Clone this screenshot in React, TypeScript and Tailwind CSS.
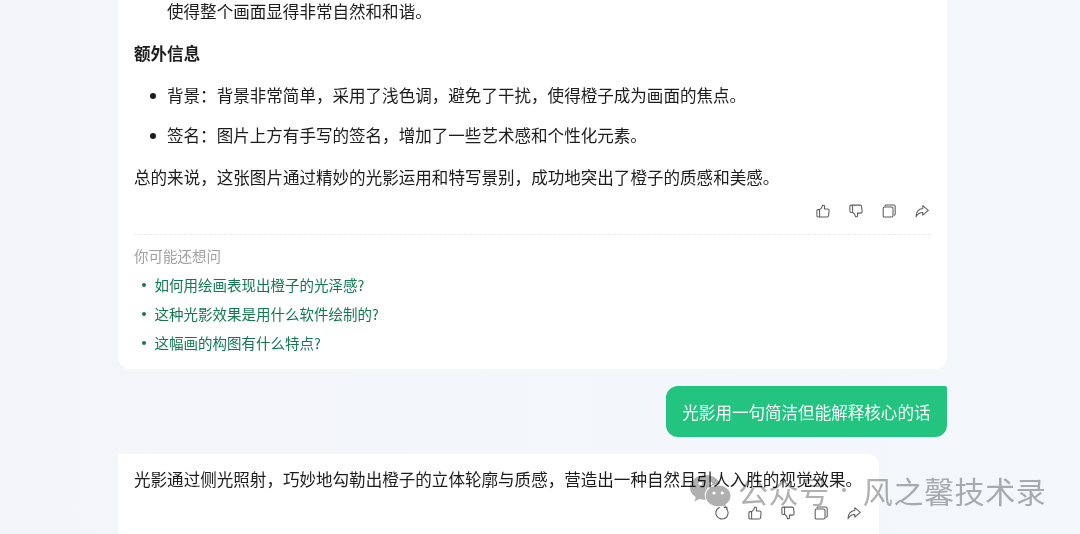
import type { ReactNode } from "react";
import clsx from "clsx";

const details = [
  "背景：背景非常简单，采用了浅色调，避免了干扰，使得橙子成为画面的焦点。",
  "签名：图片上方有手写的签名，增加了一些艺术感和个性化元素。",
];

const suggestions = [
  "如何用绘画表现出橙子的光泽感?",
  "这种光影效果是用什么软件绘制的?",
  "这幅画的构图有什么特点?",
];

function Icon({ children, className }: { children: ReactNode; className?: string }) {
  return (
    <svg
      viewBox="0 0 14 14"
      fill="none"
      stroke="currentColor"
      strokeWidth="1.05"
      strokeLinecap="round"
      strokeLinejoin="round"
      className={clsx("size-3.5", className)}
    >
      {children}
    </svg>
  );
}

const THUMB = "M3.6 5.6 5.5 4.1 6.6 1.3Q8.8.8 8.6 3L8.4 4.9H11.6Q13.1 4.9 13.1 6.3L12.6 11.6Q12.4 12.9 11.1 12.9H2Q.9 12.9.9 11.8V6.7Q.9 5.6 2 5.6ZM3.6 5.6V12.9";

function ThumbUp() {
  return (
    <Icon>
      <path d={THUMB} />
    </Icon>
  );
}

function ThumbDown() {
  return (
    <Icon className="-scale-y-100">
      <path d={THUMB} />
    </Icon>
  );
}

function Copy() {
  return (
    <Icon>
      <rect x="1.2" y="3" width="9.8" height="10" rx="1.3" />
      <path d="M3 1.7Q3.3 1 4.200 1H11.500Q13.200 1 13.200 2.700V10Q13.200 10.900 12.300 11.300" />
    </Icon>
  );
}

function Share() {
  return (
    <Icon>
      <path d="M7.8 1.7 13.3 6.4 7.8 11.1V8.5Q3.5 8.4 1 12.7 1.2 5.3 7.8 4.5Z" />
    </Icon>
  );
}

function Refresh() {
  return (
    <Icon>
      <path d="M11.8 3.200A6.100 6.100 0 1 1 4.200 1.500" />
      <path d="M9.300 1.600 11.900 1.200 11.900 3.400" />
    </Icon>
  );
}

function Actions({ refresh }: { refresh?: boolean }) {
  return (
    <div className="flex justify-end gap-[19px] text-[#5c5c5c]">
      {refresh && <Refresh />}
      <ThumbUp />
      <ThumbDown />
      <Copy />
      <Share />
    </div>
  );
}

function Watermark() {
  return (
    <div className="absolute left-[690px] top-[470px] flex h-10 items-center text-[#b0b0b0] mix-blend-multiply">
      <svg viewBox="0 0 41 36" className="h-9 w-[41px]">
        <path
          fill="currentColor"
          d="M15.5 3C7 3 0 8.4 0 15.5c0 4 2.2 7.400 5.800 9.700L4.300 29.500l5.200-2.600c2 .6 4 .9 6.300.8C12 18 20 11.500 30.200 12.200 28.500 6.800 22.500 3 15.500 3Z"
        />
        <path
          fill="currentColor"
          d="M28.200 13.500c-7 0-12.500 4.700-12.500 10.400s5.500 10.400 12.500 10.400c1.500 0 3-.2 4.300-.6l4 2-1.100-3.500c3.200-1.900 5.100-4.900 5.100-8.300 0-5.700-5.400-10.400-12.300-10.400Z"
        />
        <g fill="#fff">
          <circle cx="10.400" cy="11.500" r="1.800" />
          <circle cx="20.500" cy="11.500" r="1.800" />
          <circle cx="24" cy="21" r="1.600" />
          <circle cx="32.300" cy="21" r="1.600" />
        </g>
      </svg>
      <span className="ml-[7px] text-[30px] leading-10 tracking-[0.6px]">公众号</span>
      <span className="ml-3 mr-[17px] size-1 rounded-full bg-[#b0b0b0]" />
      <span className="text-[30px] leading-10 tracking-[0.6px]">风之馨技术录</span>
    </div>
  );
}

export default function App() {
  return (
    <div className="relative h-[534px] w-[1080px] overflow-hidden bg-linear-to-r from-[#f4f5f9] to-[#f3f8fc] font-['Noto_Sans_CJK_SC',sans-serif] text-[16.56px] leading-[26px] text-[#1c1c1c]">
      <div className="ml-[118px] flex w-[828.500px] flex-col whitespace-nowrap">
        <section className="h-[369px] rounded-b-xl bg-white px-4">
          <p className="-mt-0.5 pl-[33px]">使得整个画面显得非常自然和和谐。</p>
          <h3 className="mt-4 font-bold">额外信息</h3>
          <ul className="mt-4 flex flex-col gap-3.5">
            {details.map((text) => (
              <li key={text} className="flex items-center pl-4">
                <span className="mr-[11px] mt-0.5 size-1.5 rounded-full bg-[#1c1c1c]" />
                {text}
              </li>
            ))}
          </ul>
          <p className="mt-4">总的来说，这张图片通过精妙的光影运用和特写景别，成功地突出了橙子的质感和美感。</p>
          <div className="mt-3.5 pr-0.5">
            <Actions />
          </div>
          <div className="mt-4 border-t border-dashed border-[#ebebeb] pt-[9px] text-[14.500px] leading-6">
            <p className="text-[#a0a0a0]">你可能还想问</p>
            <ul className="mt-[5px] flex flex-col gap-[5px] text-[#12794f]">
              {suggestions.map((text) => (
                <li key={text} className="flex items-center pl-2">
                  <span className="mr-[8.500px] size-1 rounded-full bg-[#12794f]" />
                  {text}
                </li>
              ))}
            </ul>
          </div>
        </section>

        <div className="mt-[17px] h-[51px] self-end rounded-xl rounded-tr-xs bg-[#22c47f] px-4 leading-[52px] text-white">
          光影用一句简洁但能解释核心的话
        </div>

        <section className="mt-[17px] h-20 w-[761px] rounded-tr-xl bg-white px-4 pt-3">
          <p>光影通过侧光照射，巧妙地勾勒出橙子的立体轮廓与质感，营造出一种自然且引人入胜的视觉效果。</p>
          <div className="mt-3.5 pr-0.5">
            <Actions refresh />
          </div>
        </section>
      </div>
      <Watermark />
    </div>
  );
}
